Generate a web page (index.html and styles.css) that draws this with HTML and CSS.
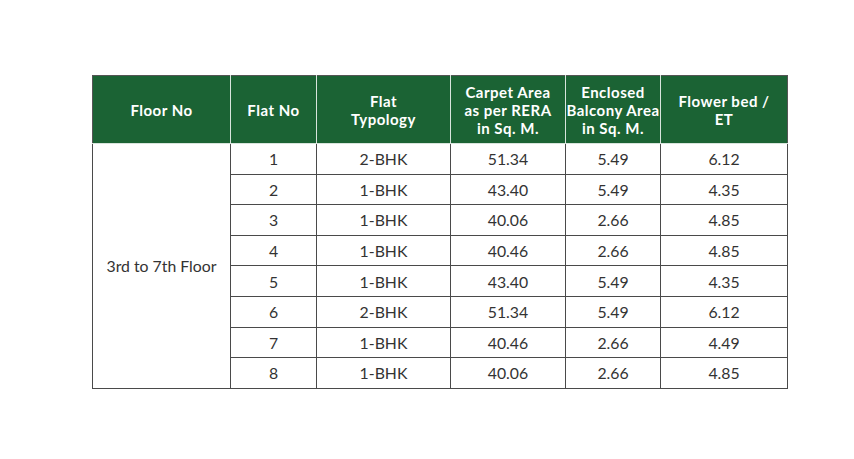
FILE: index.html
```html
<!DOCTYPE html>
<html>
<head>
<meta charset="utf-8">
<link rel="stylesheet" href="styles.css">
</head>
<body>
<div class="page">
<table class="area-table">
  <colgroup>
    <col class="c1"><col class="c2"><col class="c3"><col class="c4"><col class="c5"><col class="c6">
  </colgroup>
  <thead>
    <tr>
      <th>Floor No</th>
      <th>Flat No</th>
      <th>Flat<br>Typology</th>
      <th>Carpet Area<br>as per RERA<br>in Sq. M.</th>
      <th>Enclosed<br>Balcony Area<br>in Sq. M.</th>
      <th>Flower bed /<br>ET</th>
    </tr>
  </thead>
  <tbody>
    <tr><td rowspan="8" class="floor">3rd to 7th Floor</td><td>1</td><td>2-BHK</td><td>51.34</td><td>5.49</td><td>6.12</td></tr>
    <tr><td>2</td><td>1-BHK</td><td>43.40</td><td>5.49</td><td>4.35</td></tr>
    <tr><td>3</td><td>1-BHK</td><td>40.06</td><td>2.66</td><td>4.85</td></tr>
    <tr><td>4</td><td>1-BHK</td><td>40.46</td><td>2.66</td><td>4.85</td></tr>
    <tr><td>5</td><td>1-BHK</td><td>43.40</td><td>5.49</td><td>4.35</td></tr>
    <tr><td>6</td><td>2-BHK</td><td>51.34</td><td>5.49</td><td>6.12</td></tr>
    <tr><td>7</td><td>1-BHK</td><td>40.46</td><td>2.66</td><td>4.49</td></tr>
    <tr><td>8</td><td>1-BHK</td><td>40.06</td><td>2.66</td><td>4.85</td></tr>
  </tbody>
</table>
</div>
</body>
</html>
```

FILE: styles.css
```css
html, body {
  margin: 0;
  padding: 0;
  background: #ffffff;
}
.page {
  padding: 75px 0 0 92px;
}
.area-table {
  border-collapse: collapse;
  table-layout: fixed;
  width: 695px;
  font-family: Lato, "Open Sans", sans-serif;
  color: #333333;
}
.c1 { width: 138px; }
.c2 { width: 86px; }
.c3 { width: 134px; }
.c4 { width: 115px; }
.c5 { width: 95px; }
.c6 { width: 127px; }
.area-table th {
  background: #1b6334;
  color: #ffffff;
  font-weight: 700;
  font-size: 15px;
  line-height: 18px;
  height: 67px;
  padding: 0;
  text-align: center;
  vertical-align: middle;
  white-space: nowrap;
  border: 1px solid #d8e4dc;
  border-top-color: #555555;
  letter-spacing: 0.5px;
}
.area-table th:first-child { border-left-color: #555555; }
.area-table th:last-child { border-right-color: #555555; }
.area-table td {
  border: 1px solid #4a4a4a;
  font-size: 15.8px;
  height: 29.6px;
  padding: 0;
  text-align: center;
  vertical-align: middle;
}
```
